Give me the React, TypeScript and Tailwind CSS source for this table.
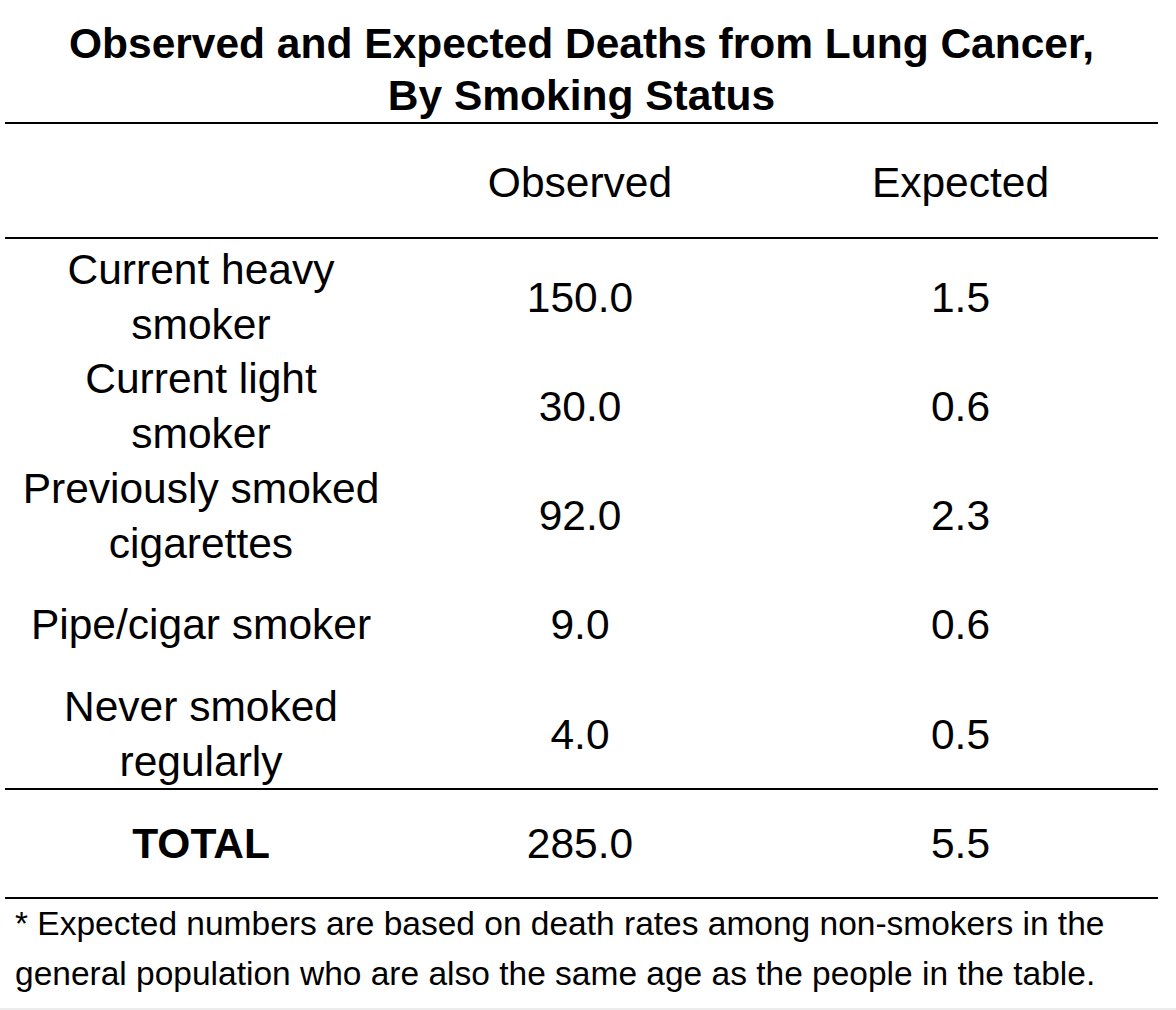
const rows = [
  { label: ["Current heavy", "smoker"], observed: "150.0", expected: "1.5" },
  { label: ["Current light", "smoker"], observed: "30.0", expected: "0.6" },
  { label: ["Previously smoked", "cigarettes"], observed: "92.0", expected: "2.3" },
  { label: ["Pipe/cigar smoker"], observed: "9.0", expected: "0.6" },
  { label: ["Never smoked", "regularly"], observed: "4.0", expected: "0.5" },
];

export default function App() {
  return (
    <div className="w-[1176px] h-[1010px] bg-white text-black flex flex-col font-['Liberation_Sans',Arial,sans-serif]">
      <div className="ml-[5px] w-[1153px] flex-1">
        <h1 className="pt-[18px] text-center text-[42.5px] font-bold leading-[52px]">
          Observed and Expected Deaths from Lung Cancer,
          <br />
          By Smoking Status
        </h1>
        <div className="h-[2px] bg-black" />

        <div className="grid grid-cols-[392px_366px_1fr] h-[113px] pt-[4px] items-center text-[42.5px] leading-[55px] text-center">
          <div />
          <div>Observed</div>
          <div>Expected</div>
        </div>
        <div className="h-[2px] bg-black" />

        <div className="pt-[3px] text-[42.5px] leading-[55px] text-center">
          {rows.map((r) => (
            <div key={r.label.join(" ")} className="grid grid-cols-[392px_366px_1fr] h-[109.3px] items-center">
              <div>
                {r.label.map((l) => (
                  <div key={l}>{l}</div>
                ))}
              </div>
              <div>{r.observed}</div>
              <div>{r.expected}</div>
            </div>
          ))}
        </div>
        <div className="h-[2px] bg-black" />

        <div className="grid grid-cols-[392px_366px_1fr] h-[107px] items-center text-[42.5px] leading-[55px] text-center">
          <div className="font-bold">TOTAL</div>
          <div>285.0</div>
          <div>5.5</div>
        </div>
        <div className="h-[2px] bg-black" />

        <p className="pl-[10px] text-[33.5px] leading-[50px]">
          * Expected numbers are based on death rates among non-smokers in the
          <br />
          general population who are also the same age as the people in the table.
        </p>
      </div>
      <div className="h-[2px] bg-[#ececec]" />
    </div>
  );
}
